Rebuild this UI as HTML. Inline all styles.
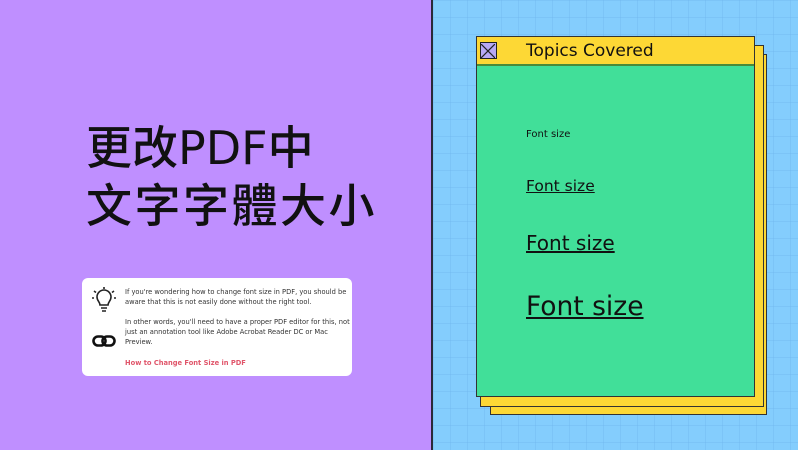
<!DOCTYPE html>
<html><head><meta charset="utf-8"><style>
*{margin:0;padding:0;box-sizing:border-box}
body{width:798px;height:450px;overflow:hidden;position:relative;font-family:"DejaVu Sans","Noto Sans CJK TC",sans-serif}
.left{position:absolute;left:0;top:0;width:432px;height:450px;background:#bf8fff}
.div{position:absolute;left:431px;top:0;width:2px;height:450px;background:#2a2a3a}
.right{position:absolute;left:433px;top:0;width:365px;height:450px;background-color:#84cdfd;
background-image:linear-gradient(rgba(110,180,235,.35) 1px,transparent 1px),linear-gradient(90deg,rgba(110,180,235,.35) 1px,transparent 1px);background-size:17px 17px}
h1{position:absolute;left:86px;top:119px;font-size:46px;line-height:58px;font-weight:500;color:#111;font-family:"DejaVu Sans","Noto Sans CJK TC",sans-serif;white-space:nowrap}
.card{position:absolute;left:82px;top:278px;width:270px;height:98px;background:#fff;border-radius:6px}
.card p{position:absolute;left:43px;font-size:6.7px;line-height:10px;color:#333;width:225px}
.card .lnk{color:#e0556a;font-weight:bold}
.l{position:absolute;background:#fdd835;border:1.5px solid #333}
.main{position:absolute;left:476px;top:36px;width:279px;height:361px;background:#41df99;border:1.5px solid #333}
.hdr{position:absolute;left:0;top:0;right:0;height:29px;background:#fdd835;border-bottom:2px solid #4a8a3a}
.hdr span{position:absolute;left:49px;top:4px;font-size:17px;color:#111}
.x{position:absolute;left:3px;top:5px;width:17px;height:17px;background:#b8a8f4;border:1.5px solid #222}
.fs{position:absolute;left:49px;color:#111;white-space:nowrap}
.u{text-decoration:underline}
</style></head><body>
<div class="left"></div><div class="right"></div><div class="div"></div>
<h1>更改PDF中<br><span style="letter-spacing:2.5px">文字字體大小</span></h1>
<div class="card">
<svg style="position:absolute;left:10px;top:9px" width="24" height="26" viewBox="0 0 24 26" fill="none" stroke="#222" stroke-width="1.6">
<path d="M8 18c0-3-3-4-3-8a7 7 0 0 1 14 0c0 4-3 5-3 8z"/><path d="M9 21h6M10 24h4"/><path d="M12 0v2M2 4l2 1.5M22 4l-2 1.5M0 11h2M22 11h2"/></svg>
<svg style="position:absolute;left:10px;top:57px" width="24" height="12" viewBox="0 0 24 12" fill="none" stroke="#111" stroke-width="2.6">
<rect x="1.5" y="1.5" width="12" height="9" rx="4.5"/><rect x="10.5" y="1.5" width="12" height="9" rx="4.5"/></svg>
<p style="top:9px">If you're wondering how to change font size in PDF, you should be aware that this is not easily done without the right tool.</p>
<p style="top:39px">In other words, you'll need to have a proper PDF editor for this, not just an annotation tool like Adobe Acrobat Reader DC or Mac Preview.</p>
<p class="lnk" style="top:80px">How to Change Font Size in PDF</p>
</div>
<div class="l" style="left:490px;top:54px;width:277px;height:361px"></div>
<div class="l" style="left:480px;top:45px;width:284px;height:362px"></div>
<div class="main">
<div class="hdr"><div class="x"><svg width="14" height="14" viewBox="0 0 14 14" stroke="#222" stroke-width="1.2"><path d="M0 0L14 14M14 0L0 14"/></svg></div><span>Topics Covered</span></div>
<div class="fs" style="top:92px;font-size:10px">Font size</div>
<div class="fs u" style="top:140px;font-size:15.5px">Font size</div>
<div class="fs u" style="top:194px;font-size:20px">Font size</div>
<div class="fs u" style="top:254px;font-size:26.5px">Font size</div>
</div>
</body></html>
